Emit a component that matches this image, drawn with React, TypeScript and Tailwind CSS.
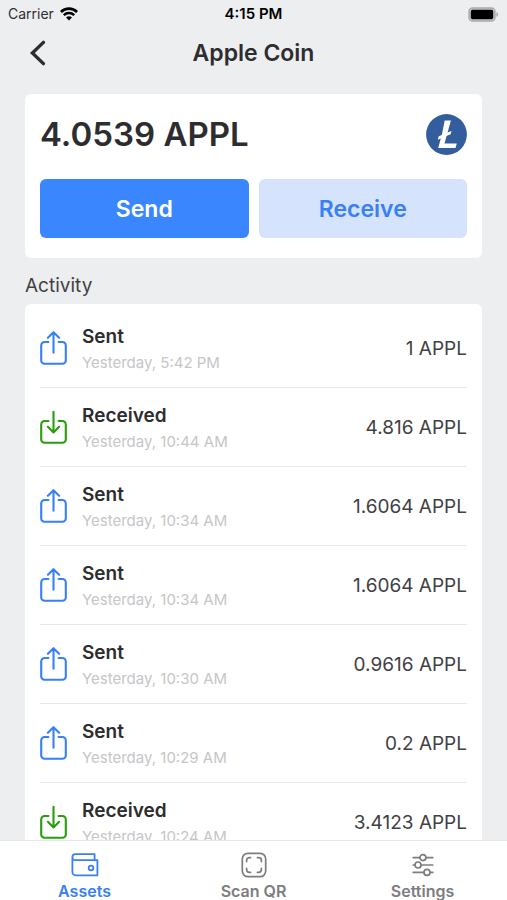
import React from 'react'

type Kind = 'Sent' | 'Received'

interface Transaction {
  kind: Kind
  date: string
  amount: string
}

const transactions: Transaction[] = [
  { kind: 'Sent', date: 'Yesterday, 5:42 PM', amount: '1 APPL' },
  { kind: 'Received', date: 'Yesterday, 10:44 AM', amount: '4.816 APPL' },
  { kind: 'Sent', date: 'Yesterday, 10:34 AM', amount: '1.6064 APPL' },
  { kind: 'Sent', date: 'Yesterday, 10:34 AM', amount: '1.6064 APPL' },
  { kind: 'Sent', date: 'Yesterday, 10:30 AM', amount: '0.9616 APPL' },
  { kind: 'Sent', date: 'Yesterday, 10:29 AM', amount: '0.2 APPL' },
  { kind: 'Received', date: 'Yesterday, 10:24 AM', amount: '3.4123 APPL' },
]

function WifiIcon() {
  return (
    <svg width="18" height="14" viewBox="0 0 18 14" fill="none" aria-hidden="true">
      <path d="M.9 5a11.4 11.4 0 0 1 16.2 0" stroke="#000" strokeWidth="2.7" />
      <path d="M3.8 8.2a7.4 7.4 0 0 1 10.4 0" stroke="#000" strokeWidth="2.4" />
      <path d="M9 13.6l-3-3a4.3 4.3 0 0 1 6 0z" fill="#000" />
    </svg>
  )
}

function BatteryIcon() {
  return (
    <svg width="31" height="15" viewBox="0 0 31 15" fill="none" aria-hidden="true">
      <rect x="1" y="1" width="26" height="13" rx="3.6" fill="#c9c9cb" stroke="#a9a9ab" strokeWidth="1.4" />
      <rect x="2.8" y="2.8" width="22.4" height="9.4" rx="1.6" fill="#000" />
      <path d="M28.4 5.2c2.2.7 2.2 3.9 0 4.6z" fill="#a9a9ab" />
    </svg>
  )
}

function LitecoinIcon() {
  return (
    <svg width="41" height="41" viewBox="0 0 41 41" aria-hidden="true">
      <circle cx="20.5" cy="20.5" r="20.4" fill="#345d9d" />
      <path
        d="M18.7 6.4h6.2l-3.3 12.1 3.9-1.6-.9 3.4-4 1.6-2.1 7.7h12.3l-1.3 4.5H12.2l2.6-9.6-3 1.2.9-3.4 3.1-1.3z"
        fill="#fff"
      />
    </svg>
  )
}

function TransactionIcon({ kind }: { kind: Kind }) {
  return (
    <svg
      width="27"
      height="34"
      viewBox="0 0 27 34"
      fill="none"
      stroke={kind === 'Sent' ? '#3880f6' : '#2a9d0c'}
      strokeWidth="2.1"
      strokeLinecap="round"
      strokeLinejoin="round"
      aria-hidden="true"
    >
      <path d="M8.4 11H4.6a3.4 3.4 0 0 0-3.4 3.4V29.4a3.4 3.4 0 0 0 3.4 3.4H22.4a3.4 3.4 0 0 0 3.4-3.4V14.4a3.4 3.4 0 0 0-3.4-3.4H18.6" />
      {kind === 'Sent' ? (
        <path d="M13.5 21.8V1.4M7.9 6.8l5.6-5.6 5.6 5.6" />
      ) : (
        <path d="M13.5 1.8v20.4M7.9 16.8l5.6 5.6 5.6-5.6" />
      )}
    </svg>
  )
}

function WalletIcon() {
  return (
    <svg width="28" height="24" viewBox="0 0 28 24" fill="none" stroke="currentColor" strokeWidth="1.8" strokeLinejoin="round" aria-hidden="true">
      <path d="M23.6 7V1.2H4.4a3 3 0 0 0-3 3V19a3.4 3.4 0 0 0 3.4 3.4h21.6V7.2H4.2a2.8 2.8 0 0 1-2.8-2.8" />
      <circle cx="20" cy="15" r="2.3" />
    </svg>
  )
}

function ScanIcon() {
  return (
    <svg width="26" height="26" viewBox="0 0 26 26" fill="none" stroke="currentColor" strokeWidth="1.7" strokeLinecap="round" aria-hidden="true">
      <rect x="1.3" y="1.3" width="23.4" height="23.4" rx="5.6" />
      <path d="M5.6 9.6V8.4a2.8 2.8 0 0 1 2.8-2.8h1.2M16.4 5.6h1.2a2.8 2.8 0 0 1 2.8 2.8v1.2M20.4 16.4v1.2a2.8 2.8 0 0 1-2.8 2.8h-1.2M9.6 20.4H8.4a2.8 2.8 0 0 1-2.8-2.8v-1.2" />
    </svg>
  )
}

function SlidersIcon() {
  return (
    <svg width="22" height="24" viewBox="0 0 22 24" fill="none" stroke="currentColor" strokeWidth="1.7" strokeLinecap="round" aria-hidden="true">
      <path d="M1.2 4.6h6.6M14 4.6h6.8M1.2 12h1.6M9.2 12h11.6M1.2 19.4h10.6M18.2 19.4h2.6" />
      <circle cx="10.9" cy="4.6" r="3" />
      <circle cx="6" cy="12" r="3" />
      <circle cx="15" cy="19.4" r="3" />
    </svg>
  )
}

const tabs = [
  { label: 'Assets', icon: <WalletIcon />, active: true },
  { label: 'Scan QR', icon: <ScanIcon />, active: false },
  { label: 'Settings', icon: <SlidersIcon />, active: false },
]

export default function App() {
  return (
    <div className="flex h-screen flex-col bg-[#edeef0] font-['Inter',sans-serif] text-[#2d2d2f]">
      {/* Status bar */}
      <div className="grid h-7 shrink-0 grid-cols-3 items-center px-2 text-black">
        <div className="flex items-center gap-1.5 text-sm text-[#2d2d2f]">
          <span>Carrier</span>
          <WifiIcon />
        </div>
        <span className="text-center text-[15px] font-semibold">4:15 PM</span>
        <div className="flex justify-end">
          <BatteryIcon />
        </div>
      </div>

      {/* Header */}
      <header className="grid h-[50px] shrink-0 grid-cols-[1fr_auto_1fr] items-center px-7">
        <button type="button" aria-label="Back" className="justify-self-start">
          <svg width="20" height="26" viewBox="0 0 20 26" fill="none" stroke="#2d2d2f" strokeWidth="3.4" strokeLinecap="round" aria-hidden="true">
            <path d="M15.4 2.4L4.4 13l11 10.6" />
          </svg>
        </button>
        <h1 className="text-[23px] font-semibold">Apple Coin</h1>
      </header>

      <main className="flex min-h-0 flex-1 flex-col overflow-hidden px-[25px] pt-4">
        {/* Balance */}
        <section className="shrink-0 rounded-md bg-white px-[15px] pb-5 pt-[19px]">
          <div className="flex items-center justify-between">
            <p className="text-[33px] font-semibold leading-[42px]">4.0539 APPL</p>
            <LitecoinIcon />
          </div>
          <div className="mt-6 grid grid-cols-2 gap-2.5">
            <button type="button" className="h-[59px] rounded-md bg-[#3a86ff] pt-0.5 text-[23px] font-semibold text-white">
              Send
            </button>
            <button type="button" className="h-[59px] rounded-md bg-[#d5e3fc] pt-0.5 text-[23px] font-semibold text-[#3a80f5]">
              Receive
            </button>
          </div>
        </section>

        <h2 className="mb-1.5 mt-4 shrink-0 text-[19px] leading-6 text-[#414144]">Activity</h2>

        {/* Transactions */}
        <ul className="shrink-0 rounded-md bg-white px-[15px] pt-[5px]">
          {transactions.map((tx, i) => (
            <li key={i} className="flex h-[79px] items-center border-b border-[#e8e8e9]">
              <TransactionIcon kind={tx.kind} />
              <div className="ml-[15px] flex-1 pt-1">
                <p className="text-[19px] font-semibold leading-6">{tx.kind}</p>
                <p className="mt-0.5 text-[15px] leading-6 text-[#c6c6c8]">{tx.date}</p>
              </div>
              <span className="pt-0.5 text-[19px] text-[#414144]">{tx.amount}</span>
            </li>
          ))}
        </ul>
      </main>

      {/* Tab bar */}
      <nav className="grid h-[60px] shrink-0 grid-cols-3 border-t border-[#e8e8e9] bg-white">
        {tabs.map((tab) => (
          <a
            key={tab.label}
            href="#"
            className={`flex flex-col items-center pt-2.5 text-base font-semibold leading-6 ${tab.active ? 'text-[#3a80f5]' : 'text-[#7d7d80]'}`}
          >
            <span className="flex h-7 items-center">{tab.icon}</span>
            {tab.label}
          </a>
        ))}
      </nav>
    </div>
  )
}
